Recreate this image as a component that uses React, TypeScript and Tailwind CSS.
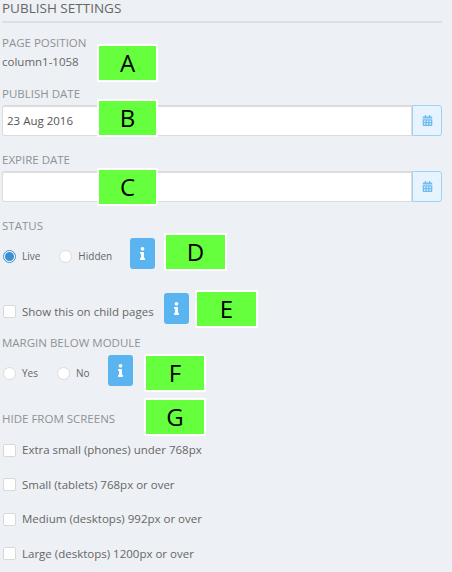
import React from 'react';
import { FaCalendarAlt, FaInfo } from 'react-icons/fa';

const labelCls = "block text-[11.5px] leading-4 text-[#8f9296] uppercase";

const Marker = ({ letter, className }: { letter: string; className: string }) => (
  <div className={`absolute h-[38px] bg-[#66ff3d] border-2 border-white flex items-center justify-center text-[24px] text-black font-['Open_Sans',sans-serif] ${className}`}>
    {letter}
  </div>
);

const DateField = ({ value }: { value?: string }) => (
  <div className="flex h-[31px] w-[440px] ml-0.5">
    <div className="flex-1 bg-white border border-[#dcdcdc] border-t-2 rounded-l-[3px] flex items-center pl-1 text-[11.5px] text-[#555]">
      {value}
    </div>
    <button className="w-[30px] bg-[#e8f4fd] border border-[#9ed3f7] rounded-r-[3px] flex items-center justify-center text-[#6fbcf3]">
      <FaCalendarAlt size={11} />
    </button>
  </div>
);

const InfoButton = ({ className }: { className: string }) => (
  <button className={`w-[25px] h-[31px] bg-[#5ab4f0] rounded-[3px] flex items-center justify-center text-white ${className}`}>
    <FaInfo size={13} />
  </button>
);

const Radio = ({ label, checked, className }: { label: string; checked?: boolean; className?: string }) => (
  <label className={`flex items-center gap-[6px] mt-[6px] text-[10px] text-[#666] ${className ?? ''}`}>
    <span className={`w-[13px] h-[13px] rounded-full bg-white border flex items-center justify-center ${checked ? 'border-[#3d8fd1]' : 'border-[#dcdcdc]'}`}>
      {checked && <span className="w-[9px] h-[9px] rounded-full bg-[#3d8fd1]" />}
    </span>
    {label}
  </label>
);

const Check = ({ label, className }: { label: string; className?: string }) => (
  <label className={`flex items-center gap-[6px] ml-[3px] text-[11.5px] leading-4 text-[#666] ${className ?? ''}`}>
    <span className="w-[13px] h-[13px] rounded-[2px] bg-white border border-[#d8d8d8]" />
    {label}
  </label>
);

export default function App() {
  return (
    <div className="relative w-[452px] h-[572px] overflow-hidden bg-[#edf0f4] font-['Open_Sans',sans-serif]">
      <h2 className="text-[13.5px] leading-4 text-[#666] h-[23px] border-b-2 border-[#dcdfe3] mr-[10px] ml-[2px]">PUBLISH SETTINGS</h2>

      <div className="pl-[2px] mt-[12px]">
        <span className={labelCls}>Page Position</span>
        <p className="mt-[3px] text-[11.5px] leading-4 text-[#666]">column1-1058</p>
      </div>

      <span className={`${labelCls} ml-[2px] mt-[16px] mb-[3px]`}>Publish Date</span>
      <DateField value="23 Aug 2016" />

      <span className={`${labelCls} ml-[2px] mt-[16px] mb-[3px]`}>Expire Date</span>
      <DateField />

      <span className={`${labelCls} ml-[2px] mt-[16px]`}>Status</span>
      <div className="flex items-center ml-[3px] mt-[4px] h-[31px]">
        <Radio label="Live" checked />
        <Radio label="Hidden" className="ml-[19px]" />
        <InfoButton className="ml-[18px]" />
      </div>

      <div className="flex items-center mt-[24px] h-[31px]">
        <Check label="Show this on child pages" className="mt-[6px]" />
        <InfoButton className="ml-[10px]" />
      </div>

      <span className={`${labelCls} ml-[2px] mt-[11px]`}>Margin Below Module</span>
      <div className="flex items-center ml-[3px] mt-[4px] h-[31px]">
        <Radio label="Yes" />
        <Radio label="No" className="ml-[19px]" />
        <InfoButton className="ml-[18px]" />
      </div>

      <span className={`${labelCls} ml-[2px] mt-[25px]`}>Hide From Screens</span>
      <div className="mt-[15px] flex flex-col gap-[18.5px]">
        <Check label="Extra small (phones) under 768px" />
        <Check label="Small (tablets) 768px or over" />
        <Check label="Medium (desktops) 992px or over" />
        <Check label="Large (desktops) 1200px or over" />
      </div>

      <Marker letter="A" className="left-[97px] top-[44px] w-[61px]" />
      <Marker letter="B" className="left-[97px] top-[99px] w-[61px]" />
      <Marker letter="C" className="left-[97px] top-[168px] w-[61px]" />
      <Marker letter="D" className="left-[164px] top-[233px] w-[63px]" />
      <Marker letter="E" className="left-[195px] top-[290px] w-[63px]" />
      <Marker letter="F" className="left-[144px] top-[354px] w-[62px]" />
      <Marker letter="G" className="left-[144px] top-[398px] w-[62px]" />
    </div>
  );
}
